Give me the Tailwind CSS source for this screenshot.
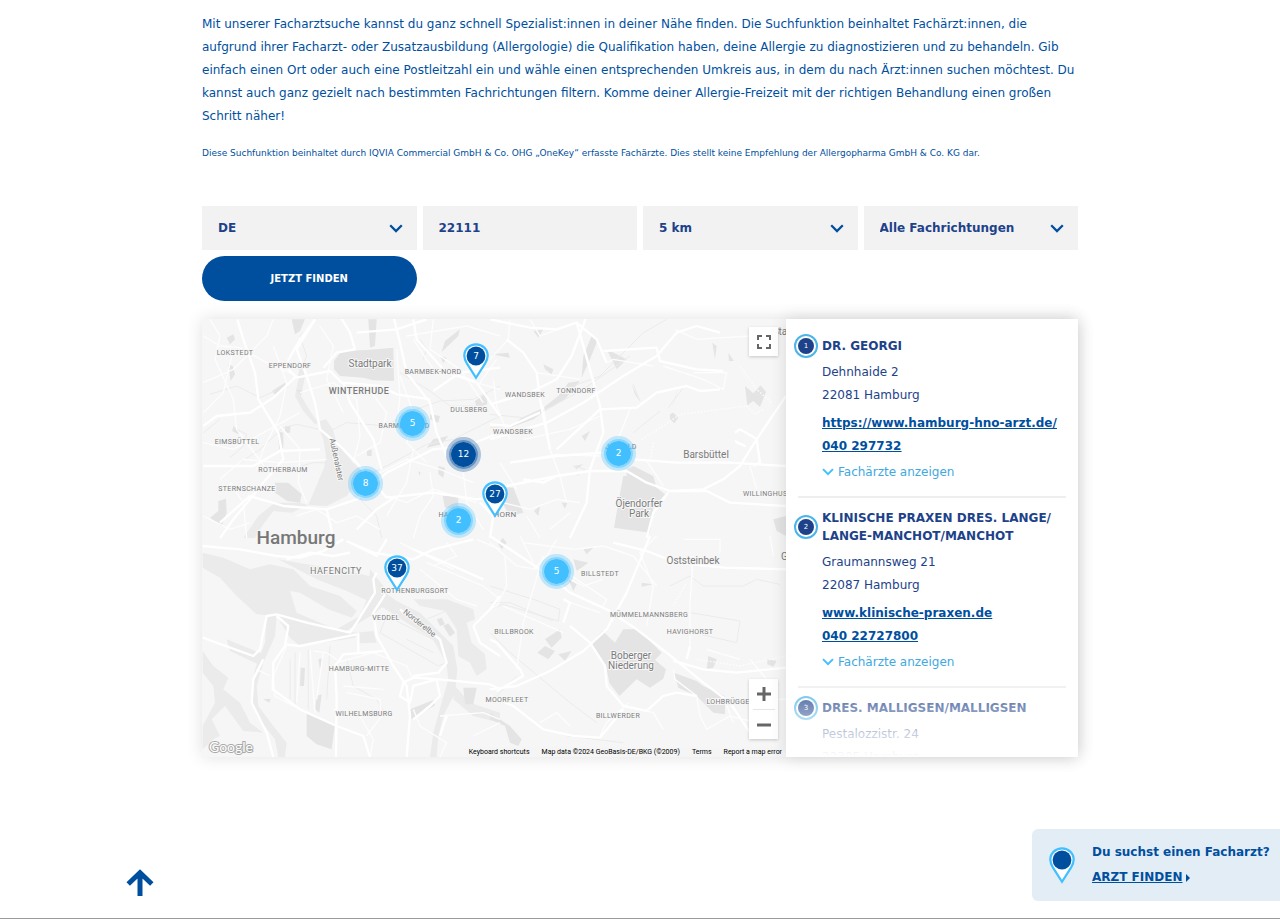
<!DOCTYPE html>
<html lang="de">
<head>
<meta charset="utf-8">
<meta name="viewport" content="width=device-width, initial-scale=1">
<title>Facharztsuche</title>
<script src="https://cdn.jsdelivr.net/npm/@tailwindcss/browser@4"></script>
</head>
<body class="min-h-screen border-b border-[#9a9a9a] bg-white font-['DejaVu_Sans',sans-serif] text-[12px] text-[#004f9f]">
<svg class="hidden" aria-hidden="true">
  <symbol id="chevron" viewBox="0 0 14 9"><path d="M1.2 1.2 7 7l5.800-5.800" fill="none" stroke="currentColor" stroke-width="2.300"/></symbol>
  <symbol id="pin" viewBox="0 0 26 37"><path d="M13 1.300C6.500 1.300 1.300 6.300 1.300 12.700c0 3 1.200 5.300 2.700 8L13 34.800l9-14.100c1.500-2.700 2.700-5 2.700-8C24.700 6.300 19.500 1.300 13 1.300Z" fill="#fff" stroke="#41bfff" stroke-width="2.200"/><circle cx="13" cy="13" r="9.400" fill="#004f9f"/></symbol>
</svg>

<main class="mx-auto max-w-[876px] pt-[13px]">
  <p class="leading-[23px]">Mit unserer Facharztsuche kannst du ganz schnell Spezialist:innen in deiner Nähe finden. Die Suchfunktion beinhaltet Fachärzt:innen, die aufgrund ihrer Facharzt- oder Zusatzausbildung (Allergologie) die Qualifikation haben, deine Allergie zu diagnostizieren und zu behandeln. Gib einfach einen Ort oder auch eine Postleitzahl ein und wähle einen entsprechenden Umkreis aus, in dem du nach Ärzt:innen suchen möchtest. Du kannst auch ganz gezielt nach bestimmten Fachrichtungen filtern. Komme deiner Allergie-Freizeit mit der richtigen Behandlung einen großen Schritt näher!</p>
  <p class="mt-[17px] text-[9px] leading-4">Diese Suchfunktion beinhaltet durch IQVIA Commercial GmbH &amp; Co. OHG „OneKey“ erfasste Fachärzte. Dies stellt keine Empfehlung der Allergopharma GmbH &amp; Co. KG dar.</p>

  <form class="mt-[45px] grid grid-cols-4 gap-1.5 font-bold text-[#1d428a]">
    <div class="relative">
      <select aria-label="Land" class="block h-11 w-full appearance-none bg-[#f2f2f2] px-4 outline-none"><option>DE</option></select>
      <svg class="pointer-events-none absolute top-[18px] right-3.5 h-[9px] w-3.5 text-[#004f9f]"><use href="#chevron"/></svg></div>
    <input type="text" aria-label="Ort oder Postleitzahl" value="22111" class="h-11 w-full bg-[#f2f2f2] px-4 outline-none">
    <div class="relative">
      <select aria-label="Umkreis" class="block h-11 w-full appearance-none bg-[#f2f2f2] px-4 outline-none"><option>5 km</option></select>
      <svg class="pointer-events-none absolute top-[18px] right-3.5 h-[9px] w-3.5 text-[#004f9f]"><use href="#chevron"/></svg></div>
    <div class="relative">
      <select aria-label="Fachrichtung" class="block h-11 w-full appearance-none bg-[#f2f2f2] px-4 outline-none"><option>Alle Fachrichtungen</option></select>
      <svg class="pointer-events-none absolute top-[18px] right-3.5 h-[9px] w-3.5 text-[#004f9f]"><use href="#chevron"/></svg></div>
    <button type="button" class="h-[45px] rounded-full bg-[#004f9f] text-[10px] text-white">JETZT FINDEN</button>
  </form>

  <div class="mt-[18px] grid h-[438px] grid-cols-[2fr_1fr] shadow-[0_0_16px_rgba(0,0,0,0.12)]">
    <section aria-label="Karte" class="relative min-w-0 overflow-hidden bg-[#f6f6f6] font-[Roboto,sans-serif]">
      <svg class="block h-full w-full" viewBox="202 319 584 438" preserveAspectRatio="xMinYMin slice" aria-hidden="true">
        <!-- water -->
        <g fill="#ebebeb">
          <g transform="translate(200 316) scale(.3333)">
            <path d="M350 318 378 310 398 340 412 385 460 440 490 470 440 540 380 570 325 567 345 520 372 455 378 420 370 370Z"/>
            <path d="M300 130 315 180 303 240 330 285 355 320 345 325 310 285 285 240 295 190Z"/>
            <path d="M325 567 275 590 220 585 190 625 165 666 130 666 175 600 225 560 300 560Z"/>
          </g>
          <g transform="translate(200 536) scale(.3333)">
            <path d="M8 50 70 65 150 100 210 85 280 100 330 150 420 180 470 225 455 245 385 220 300 170 270 165 290 230 420 285 470 290 465 305 300 330 270 305 230 240 170 235 110 180 60 125 8 95Z"/>
            <path d="M235 70 320 85 420 100 530 125 540 160 590 195 660 230 710 280 760 330 772 400 765 470 730 540 715 600 710 663 690 663 700 590 725 500 745 430 738 370 700 310 620 260 550 215 440 165 350 130Z"/>
            <path d="M200 230 230 240 225 300 190 380 170 450 175 510 220 570 260 620 255 663 235 663 225 610 170 540 155 480 165 400 195 320Z"/>
            <path d="M8 345 40 390 85 425 70 460 120 500 150 560 190 590 130 585 75 510 35 550 60 600 40 610 8 640V570L45 500 40 450 8 410Z"/>
            <path d="M510 100 550 150 550 210 520 235 430 290 410 280 480 240 505 180Z M470 290 520 285 530 320 475 322Z M640 190 740 190 820 220 825 250 800 260 815 320 855 355 860 400 830 420 810 380 775 360 770 280 735 225 660 210Z"/>
            <path d="M765 450 810 500 900 530V560L820 540 760 490Z M100 150 190 160 180 210 130 170Z M80 310 190 355 185 390 90 345Z"/>
          </g>
        </g>
        <!-- parks and woods -->
        <g fill="#e4e4e4">
          <g transform="translate(200 316) scale(.3333)">
            <path d="M402 135 425 105 500 102 580 95 582 195 520 193 490 185 420 180 402 160Z"/>
            <path d="M275 10 315 10 300 45 285 55Z M505 10 530 10 525 90 510 95Z M216 225 255 200 262 212 225 236Z M80 65 100 55 105 70 90 85Z M85 145 98 150 105 175 92 195Z M290 220 312 225 300 235Z"/>
            <path d="M225 500 265 500 305 535 300 560 262 555 225 530Z M55 555 78 548 80 590 65 630 30 605 55 585Z M232 345 250 350 250 395 238 400Z M255 330 272 330 270 350 255 350Z M100 330 120 345 115 355 97 345Z"/>
            <path d="M735 75 780 40 775 60 725 108Z M825 255 860 230 862 265 830 275Z M700 370 745 360 725 385 680 395Z M715 450 735 455 730 485 715 475Z M690 295 720 300 715 320 690 310Z M728 540 775 540 775 580 735 575Z M500 405 515 400 515 420 502 420Z M720 120 740 125 730 142Z M655 465 662 470 658 480Z"/>
          </g>
          <g transform="translate(490 316) scale(.3333)">
            <path d="M305 60 322 75 300 130 275 185 280 120Z M350 100 410 130 380 160Z M235 200 270 195 225 250 180 275 130 310 60 335 95 305 160 275 205 240Z M160 145 190 160 185 175 165 160Z M275 360 300 345 285 375Z M540 295 550 290 565 305 553 322 540 310Z M765 210 790 232 812 208 828 228 810 273 790 255 772 268Z M545 275 565 215 555 250Z M715 110 732 135 717 135Z M667 80 680 90 675 130Z M425 203 450 258 435 235Z M130 45 160 40 145 65Z"/>
            <path d="M400 480 490 480 500 515 525 535 490 575 480 650 372 635 385 560Z M410 460 430 450 490 480 485 505 410 480Z M30 512 70 515 100 590 60 600 30 550Z M132 585 150 570 145 600Z M215 560 232 560 225 578Z M850 610 888 600V660L860 645Z M250 450 280 445 260 460Z M5 115 55 110 60 125Z"/>
          </g>
          <g transform="translate(490 536) scale(.3333)">
            <path d="M303 322 338 285 375 320 400 280 445 280 515 350 495 372 528 400 520 428 480 455 440 430 388 480 358 440 348 390Z"/>
            <path d="M552 410 620 435 640 450 705 480 705 535 670 530 620 480 565 455Z M655 360 680 370 670 395 650 400Z M142 350 165 330 195 345 175 370Z M165 310 210 280 215 305 185 335Z M205 355 245 345 225 375Z M250 70 295 80 260 105Z M235 130 260 145 250 165Z M25 25 38 5 50 20 35 40Z M455 140 490 145 455 152Z M832 370 860 375 850 392 832 385Z M280 40 310 35 290 55Z M0 530 60 570 95 610 85 630 60 620 45 570 0 550Z"/>
          </g>
          <g transform="translate(200 536) scale(.3333)">
            <path d="M320 533 405 565 395 640 350 625 320 600Z M630 520 700 492 705 508 635 550Z M790 455 830 455 820 505 795 505Z M302 395 315 395 312 450 300 450Z M350 480 365 475 358 530 345 520Z M730 270 745 262 765 290 750 302Z M710 250 725 245 735 265 720 270Z M355 370 370 365 360 400Z M190 490 212 488 208 500Z"/>
          </g>
        </g>
        <!-- rail lines and docks -->
        <g fill="none" stroke="#ebebeb" stroke-width="3">
          <g transform="translate(200 316) scale(.3333)">
            <path d="M30 235 110 210 180 245 225 225M290 190 320 120 300 60 340 20M120 440 180 400 250 335 290 325 380 345M390 345 440 320 560 330 620 290 720 255 820 250 900 210M440 500 490 560 530 600 545 666M600 170 690 225 750 270 850 270M250 465 340 440 380 440M60 310 10 350M100 335 140 355 130 390 90 425M660 70 680 100 670 130M450 500 560 450 680 385 760 370 900 300"/>
          </g>
          <g transform="translate(490 316) scale(.3333)">
            <path d="M0 295 100 305 180 275 280 220 420 120M250 210 330 180 460 50 530 10M430 205 450 255M535 275 580 215M0 335 60 330M250 450 285 460 260 480M510 285 430 350"/>
          </g>
          <g transform="translate(200 536) scale(.3333)">
            <path d="M270 370V490M285 350V515M325 340V520M390 330 380 490M560 240 700 310 740 380 715 390 540 290ZM620 310 700 350M440 370 460 450 530 490 560 540M645 190 660 205 700 190M680 250 750 220"/>
          </g>
          <g transform="translate(490 536) scale(.3333)">
            <path d="M0 150 130 190 210 220 205 255 40 205 0 220M0 200 60 200 190 255M0 290 60 350M60 350 240 500 320 560M540 150 600 120 640 150 760 150 800 130 870 145M600 230 750 255 740 320 610 290M80 420 0 500M230 600 400 620"/>
          </g>
        </g>
        <!-- minor streets -->
        <g fill="none" stroke="#fdfdfd" stroke-width="4">
          <g transform="translate(200 316) scale(.3333)">
            <path d="M10 60 60 90 120 95 200 140 290 180M30 10 60 60 45 130 100 250 110 340 200 460M10 200 100 160 200 60 220 10M100 100 70 230 10 290M220 90 260 200 240 300 190 400 170 460M10 380 100 400 190 350 300 290M60 490 130 430 240 440 380 430M240 330 300 400 295 500 320 560M300 230 400 200 470 250 480 360 460 440M360 30 400 90 380 190 430 290M600 180 640 290 620 380 680 440M590 100 600 240 590 340M640 70 700 160 830 200 900 220M700 10 690 100 780 160 850 260M500 210 560 290 540 380 470 420M520 480 620 430 720 460 820 500M560 540 620 560 700 520 830 560M560 600 620 500 640 400M640 666 660 600 700 540 690 470M790 470 800 560 850 640M10 600 90 640 150 620M90 500 130 560 140 666M290 600 350 580 410 620 470 600 540 640M620 60 800 30 900 60M840 200 890 130"/>
          </g>
          <g transform="translate(490 316) scale(.3333)">
            <path d="M60 10 55 70 0 130M140 170 270 190M10 190 20 270 60 370M160 270 180 400 210 480 230 560M60 440 200 415 330 420M100 370 240 340 330 300M240 590 180 640M30 440 80 520M520 150 640 190 700 220 710 170 610 170M420 280 400 330 380 380M470 435 520 510M555 40 620 70 780 60M0 550 120 580 200 550 270 560M780 450 800 520M110 600 150 666M120 10 150 60 260 20M350 140 370 130 490 150"/>
            <path d="M455 370 520 330 570 295 770 270M750 150 800 220 845 260M490 380 480 435M770 270 795 295 820 280" stroke-dasharray="5 5"/>
          </g>
          <g transform="translate(200 536) scale(.3333)">
            <path d="M340 345 380 350 410 370M260 330 220 420 225 480 300 520M400 520 480 540 520 610 510 663M410 380 520 350 620 390 640 430M440 470 540 490 545 540 500 600M430 450 550 460M640 520 660 570 740 620 720 663M720 540 850 530 900 550M680 80 850 150 900 190M660 100 770 190 830 210M600 20 680 60 760 100M740 20 770 60 700 90M300 350 290 500M330 340 345 530M370 350 350 490M170 400 210 420M830 10 900 40M820 600 900 560"/>
          </g>
          <g transform="translate(490 536) scale(.3333)">
            <path d="M0 20 80 90 140 100M45 60 50 150 20 210 0 220M90 0 130 80M160 60 100 260 80 400M130 100 170 60 200 10M230 110 350 190 340 210M240 130 280 150 340 130M40 210 220 290M240 200 330 230M100 20 250 40 340 30 430 60 500 150M500 0 450 50 490 150 470 270M610 60 600 200 600 340M580 10 690 10 690 50M650 340 750 370M400 510 490 530 520 580M550 400 555 430 620 480 630 540 650 580 720 540 800 560M330 600 350 560 415 500M150 560 200 530 240 570M780 370 830 430 810 490 888 490M840 0 850 60M700 480 730 560"/>
            <path d="M550 210 590 140M600 60 610 130M620 370 750 390 888 360" stroke-dasharray="5 5"/>
          </g>
        </g>
        <!-- main roads -->
        <g fill="none" stroke="#fff" stroke-width="7" stroke-linejoin="round">
          <g transform="translate(200 316) scale(.3333)">
            <path d="M112 10 130 70 165 170 175 250 235 350 250 430 190 500 150 550 100 610 60 666"/>
            <path d="M345 10 300 70 255 150 290 185 390 165 425 200 540 210 590 235 690 250M420 0 450 50 465 100 410 110 370 155"/>
            <path d="M10 330 50 300 150 290 220 245 290 180M345 10 290 100 320 180 345 260 360 340 420 390 470 440 560 545"/>
            <path d="M430 200 450 260 520 370 545 460M10 450 160 450 240 405 360 400M60 620 150 540 250 570 380 580 470 550 560 470 700 400 800 390 900 350"/>
            <path d="M580 0 600 80 620 170 690 260 710 350 740 420M640 10 650 70 730 160 830 200 900 300M700 225 780 170 900 155M560 545 700 530 830 550 900 540M380 580 400 666M470 640 530 580 590 540M840 560 880 600 870 666M470 50 590 40 680 10"/>
          </g>
          <g transform="translate(490 316) scale(.3333)">
            <path d="M0 10 120 35 200 40 260 20 320 70 350 140M290 0 245 120 200 190 120 230 0 265M0 370 170 320 280 260 400 180 500 120 560 50 620 30 690 50M260 20 300 160 330 270 340 350 300 460 290 560 240 666M50 70 100 110 140 170 150 250 180 400"/>
            <path d="M0 325 60 330 150 290M200 400 330 280 440 275 500 230 590 210 630 225 690 220M340 105 500 95 510 135 620 160 700 165M60 440 200 420 340 410M430 430 560 440 720 440 888 450"/>
            <path d="M50 510 200 480 300 465 410 465 470 500 540 525 640 520 700 490 750 450 800 370 888 240M540 525 650 525 720 560 888 570M535 530 490 590 470 666M735 350 750 340 785 360 800 370 810 440 790 450M735 375 765 390 740 380M200 480 160 500 100 490"/>
          </g>
          <g transform="translate(200 536) scale(.3333)">
            <path d="M8 30 120 40 230 60 300 65 370 45 430 10M260 70 330 50 400 60 450 50M440 15 530 60 560 10M450 20 520 50 640 70 700 40 820 10"/>
            <path d="M8 305 160 360 180 340 200 240 230 235 320 260 450 290 470 260 525 170 520 130 530 110M230 240 265 270 255 330 220 380 218 460 300 520 410 570 490 600 510 663M255 325 300 330 470 295M475 290 475 350"/>
            <path d="M555 175 520 230 530 300 580 390 620 450 630 540 620 663M408 663 410 480 405 390 430 355 550 345M610 440 640 425 720 430 870 445 900 460M610 440 600 480 630 500 640 450 710 430 720 480 690 510 640 550M190 370 160 430 155 500 200 590 220 663M720 600 740 540M600 220 720 310 740 380 715 410 640 420M820 270 870 220 900 180M820 270 840 320 900 360M640 40 760 90 850 130"/>
          </g>
          <g transform="translate(490 536) scale(.3333)">
            <path d="M0 460 80 450 180 405 280 345 350 280 410 170 460 50 480 0M0 0 90 60 180 120 240 170 350 220 440 280 530 350 640 440 720 500 780 590 860 600"/>
            <path d="M550 375 640 400 740 410 888 395M240 270 300 320 345 390 350 450 400 510 470 525 520 480 560 470 620 480M0 480 70 510 160 580 250 600 330 605 400 520M20 465 100 420 90 400 20 320 0 310M370 20 470 45 560 80 700 95 888 100M220 260 240 200 220 190M600 330 590 370"/>
          </g>
        </g>
        <!-- place names -->
        <g fill="#7b7b7b" stroke="#f7f7f7" stroke-width="2" paint-order="stroke" text-anchor="middle">
          <g class="text-[7px] tracking-wider">
            <text x="235" y="355">LOKSTEDT</text><text x="290" y="368">EPPENDORF</text><text x="433" y="374">BARMBEK-NORD</text><text x="469" y="412">DULSBERG</text><text x="404" y="428">BARMBEK-SÜD</text><text x="237" y="444">EIMSBÜTTEL</text><text x="283" y="472">ROTHERBAUM</text><text x="247" y="491">STERNSCHANZE</text><text x="525" y="397">WANDSBEK</text><text x="576" y="393">TONNDORF</text><text x="513" y="434">WANDSBEK</text><text x="621" y="449">JENFELD</text><text x="450" y="517">HAMM</text><text x="505" y="517" class="text-[8px]">HORN</text><text x="770" y="496">WILLINGHUSEN</text>
            <text x="415" y="593">ROTHENBURGSORT</text><text x="386" y="620">VEDDEL</text><text x="359" y="671">HAMBURG-MITTE</text><text x="364" y="716">WILHELMSBURG</text><text x="600" y="576">BILLSTEDT</text><text x="649" y="617">MÜMMELMANNSBERG</text><text x="690" y="634">HAVIGHORST</text><text x="514" y="634">BILLBROOK</text><text x="507" y="702">MOORFLEET</text><text x="618" y="718">BILLWERDER</text><text x="728" y="704">LOHBRÜGGE</text>
          </g>
          <g class="text-[9px] font-medium tracking-wider"><text x="359" y="394">WINTERHUDE</text><text x="336" y="574" class="font-normal">HAFENCITY</text></g>
          <g class="text-[10px]"><text x="370" y="367">Stadtpark</text><text x="706" y="458">Barsbüttel</text><text x="639" y="507">Öjendorfer</text><text x="639" y="517">Park</text><text x="693" y="564">Oststeinbek</text><text x="631" y="659">Boberger</text><text x="631" y="669">Niederung</text><text x="795" y="335">Stapelfeld</text><text x="795" y="560">Glinde</text></g>
          <text x="296" y="544" class="text-[19px] font-medium" fill="#777">Hamburg</text>
          <text transform="translate(334 460) rotate(78)" class="text-[8px]">Außenalster</text>
          <text transform="translate(418 625) rotate(39)" class="text-[8px]">Norderelbe</text>
        </g>
        <text x="209" y="752" class="font-[Lato,sans-serif] text-[14px]" fill="#fff" stroke="#aaa" stroke-width="2" paint-order="stroke">Google</text>
      </svg>

      <div class="font-['DejaVu_Sans',sans-serif] text-[9px] text-white">
        <button type="button" class="absolute top-[87px] left-[193px] size-[35px] rounded-full border-3 border-[#41bfff]/30"><span class="flex size-full items-center justify-center rounded-full border-2 border-[#41bfff]/60 bg-[#41bfff] bg-clip-padding">5</span></button>
        <button type="button" class="absolute top-[118px] left-[244px] size-[35px] rounded-full border-3 border-[#004f9f]/30"><span class="flex size-full items-center justify-center rounded-full border-2 border-[#004f9f]/60 bg-[#004f9f] bg-clip-padding">12</span></button>
        <button type="button" class="absolute top-[147px] left-[146px] size-[35px] rounded-full border-3 border-[#41bfff]/30"><span class="flex size-full items-center justify-center rounded-full border-2 border-[#41bfff]/60 bg-[#41bfff] bg-clip-padding">8</span></button>
        <button type="button" class="absolute top-[184px] left-[239px] size-[35px] rounded-full border-3 border-[#41bfff]/30"><span class="flex size-full items-center justify-center rounded-full border-2 border-[#41bfff]/60 bg-[#41bfff] bg-clip-padding">2</span></button>
        <button type="button" class="absolute top-[117px] left-[399px] size-[35px] rounded-full border-3 border-[#41bfff]/30"><span class="flex size-full items-center justify-center rounded-full border-2 border-[#41bfff]/60 bg-[#41bfff] bg-clip-padding">2</span></button>
        <button type="button" class="absolute top-[235px] left-[337px] size-[35px] rounded-full border-3 border-[#41bfff]/30"><span class="flex size-full items-center justify-center rounded-full border-2 border-[#41bfff]/60 bg-[#41bfff] bg-clip-padding">5</span></button>

        <button type="button" class="absolute top-6 left-[261px] h-[37px] w-[26px]"><svg class="absolute inset-0 size-full"><use href="#pin"/></svg><span class="absolute inset-x-0 top-0 leading-[26px]">7</span></button>
        <button type="button" class="absolute top-[162px] left-[280px] h-[37px] w-[26px]"><svg class="absolute inset-0 size-full"><use href="#pin"/></svg><span class="absolute inset-x-0 top-0 leading-[26px]">27</span></button>
        <button type="button" class="absolute top-[236px] left-[182px] h-[37px] w-[26px]"><svg class="absolute inset-0 size-full"><use href="#pin"/></svg><span class="absolute inset-x-0 top-0 leading-[26px]">37</span></button>
      </div>

      <button type="button" aria-label="Vollbild" class="absolute top-2 right-2 flex size-[29px] items-center justify-center bg-white text-[#666] shadow-[0_1px_3px_rgba(0,0,0,0.2)]"><svg class="size-3.5" viewBox="0 0 14 14" fill="none" stroke="currentColor" stroke-width="2"><path d="M1 5V1h4M9 1h4v4M13 9v4H9M5 13H1V9"/></svg></button>
      <div class="absolute right-2 bottom-[18px] flex w-[29px] flex-col items-center bg-white text-[#666] shadow-[0_1px_3px_rgba(0,0,0,0.2)]">
        <button type="button" aria-label="Vergrößern" class="flex h-[30px] w-full items-center justify-center"><svg class="size-3.5" viewBox="0 0 14 14" fill="none" stroke="currentColor" stroke-width="3"><path d="M7 0v14M0 7h14"/></svg></button>
        <span class="h-px w-[22px] bg-[#e6e6e6]"></span>
        <button type="button" aria-label="Verkleinern" class="flex h-[29px] w-full items-center justify-center"><svg class="size-3.5" viewBox="0 0 14 14" fill="none" stroke="currentColor" stroke-width="3"><path d="M0 7h14"/></svg></button>
      </div>
      <div class="absolute right-0 bottom-0 flex gap-3 bg-[#f5f5f5]/70 px-1 text-[7px] leading-[10px] whitespace-nowrap text-black">
        <button type="button">Keyboard shortcuts</button><span>Map data ©2024 GeoBasis-DE/BKG (©2009)</span><a href="#">Terms</a><a href="#">Report a map error</a>
      </div>
    </section>

    <aside aria-label="Suchergebnisse" class="relative overflow-hidden bg-white px-3 pt-[15px] text-[#1d428a] shadow-[0_0_16px_rgba(0,0,0,0.12)]">
      <article class="border-b-2 border-[#eee] pb-[13px]">
        <div class="-ml-1 flex items-center gap-1"><span class="flex size-6 shrink-0 items-center justify-center rounded-full border-2 border-[#4ab5e8]"><span class="flex size-4 items-center justify-center rounded-full bg-[#1d428a] text-[7px] text-white">1</span></span><h2 class="font-bold leading-[18px]">DR. GEORGI</h2></div>
        <div class="pl-6">
          <address class="mt-[3px] not-italic leading-[23px]">Dehnhaide 2<br>22081 Hamburg</address>
          <p class="mt-[5px] font-bold leading-[23px] text-[#004f9f] underline"><a href="#">https://www.hamburg-hno-arzt.de/</a><br><a href="#">040 297732</a></p>
          <button type="button" class="mt-[2px] flex h-[23px] items-center gap-1 text-[#41a9e0]"><svg class="h-2 w-3 text-[#41bfff]"><use href="#chevron"/></svg>Fachärzte anzeigen</button>
        </div>
      </article>
      <article class="border-b-2 border-[#eee] pt-[11px] pb-[13px]">
        <div class="-ml-1 flex items-center gap-1"><span class="flex size-6 shrink-0 items-center justify-center rounded-full border-2 border-[#4ab5e8]"><span class="flex size-4 items-center justify-center rounded-full bg-[#1d428a] text-[7px] text-white">2</span></span><h2 class="font-bold leading-[18px]">KLINISCHE PRAXEN DRES. LANGE/<wbr>LANGE-MANCHOT/MANCHOT</h2></div>
        <div class="pl-6">
          <address class="mt-1.5 not-italic leading-[23px]">Graumannsweg 21<br>22087 Hamburg</address>
          <p class="mt-[5px] font-bold leading-[23px] text-[#004f9f] underline"><a href="#">www.klinische-praxen.de</a><br><a href="#">040 22727800</a></p>
          <button type="button" class="mt-[2px] flex h-[23px] items-center gap-1 text-[#41a9e0]"><svg class="h-2 w-3 text-[#41bfff]"><use href="#chevron"/></svg>Fachärzte anzeigen</button>
        </div>
      </article>
      <article class="pt-2">
        <div class="-ml-1 flex items-center gap-1"><span class="flex size-6 shrink-0 items-center justify-center rounded-full border-2 border-[#4ab5e8]"><span class="flex size-4 items-center justify-center rounded-full bg-[#1d428a] text-[7px] text-white">3</span></span><h2 class="font-bold leading-[18px]">DRES. MALLIGSEN/MALLIGSEN</h2></div>
        <address class="mt-[3px] pl-6 not-italic leading-[23px]">Pestalozzistr. 24<br>22305 Hamburg</address>
      </article>
      <div class="pointer-events-none absolute inset-x-0 bottom-0 h-[84px] bg-linear-to-b from-white/0 to-white"></div>
    </aside>
  </div>
</main>

<a href="#" aria-label="Nach oben" class="fixed bottom-[22px] left-[126px] text-[#004f9f]"><svg class="block h-7 w-7" viewBox="0 0 28 28" fill="none" stroke="currentColor" stroke-width="5"><path d="M14 27V4M2.200 15 14 3.700 25.800 15"/></svg></a>
<aside aria-label="Arztsuche" class="fixed right-0 bottom-[18px] flex h-[72px] w-[248px] items-center gap-[17px] rounded-l-md bg-[#e3edf6] pl-[17px] font-bold">
  <svg class="h-[37px] w-[26px] shrink-0"><use href="#pin"/></svg>
  <div class="whitespace-nowrap leading-[25px]"><p>Du suchst einen Facharzt?</p><a href="#" class="flex items-center gap-[3px]"><span class="underline">ARZT FINDEN</span><svg class="h-2 w-1" viewBox="0 0 4 8"><path d="M0 0 4 4 0 8Z" fill="currentColor"/></svg></a></div>
</aside>
</body>
</html>
